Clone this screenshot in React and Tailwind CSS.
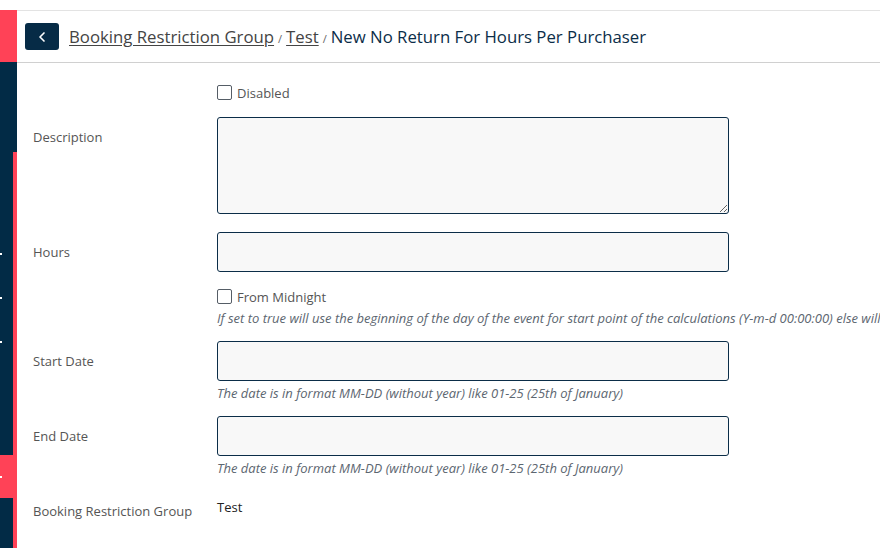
import { ChevronLeft } from "lucide-react";

function Checkbox({ label }) {
  return (
    <label className="flex items-center h-[15px]">
      <span className="w-[15px] h-[15px] border border-[#555d66] rounded-[2px] bg-white"></span>
      <span className="ml-[5px] mt-[3px] text-[13px] text-[#555]">{label}</span>
    </label>
  );
}

function Help({ children }) {
  return (
    <p className="text-[13px] leading-[18px] italic text-[#5c6670] whitespace-nowrap">{children}</p>
  );
}

function Row({ label, labelClass = "pt-[10px]", className = "", children }) {
  return (
    <div className={`flex ${className}`}>
      <div className={`w-[184px] shrink-0 text-[13px] leading-[20px] text-[#555] ${labelClass}`}>{label}</div>
      <div className="w-[512px] shrink-0">{children}</div>
    </div>
  );
}

function Sidebar() {
  return (
    <div className="w-[17px] shrink-0 flex flex-col">
      <div className="h-[10px] bg-white"></div>
      <div className="h-[52px] bg-[#ff4257]"></div>
      <div className="flex-1 flex bg-[#022b46]">
        <div className="w-[13px] flex flex-col relative">
          <div className="h-[393px]"></div>
          <div className="h-[43px] bg-[#ff4257] -mr-[4px] relative z-10"></div>
          <span className="absolute left-0 top-[191px] w-[2px] h-[2px] bg-white"></span>
          <span className="absolute left-0 top-[235px] w-[2px] h-[2px] bg-white"></span>
          <span className="absolute left-0 top-[279px] w-[2px] h-[2px] bg-white"></span>
          <span className="absolute left-0 top-[414px] w-[2px] h-[2px] bg-white z-20"></span>
        </div>
        <div className="w-[4px] flex flex-col">
          <div className="h-[90px]"></div>
          <div className="flex-1 bg-[#ff4257]"></div>
        </div>
      </div>
    </div>
  );
}

export default function App() {
  const inputClass = "block w-[512px] h-[40px] border border-[#0b2d48] rounded-[3px] bg-[#f8f8f8]";
  return (
    <div className="h-[548px] w-[880px] overflow-hidden flex bg-white" style={{ fontFamily: '"Open Sans", sans-serif' }}>
      <Sidebar />
      <div className="flex-1 min-w-0 overflow-hidden">
        <div className="mt-[10px] h-[53px] border-t border-b border-t-[#e3e3e3] border-b-[#d0d0d0] flex items-center pl-[8px]">
          <button className="w-[34px] h-[27px] rounded-[3px] bg-[#062b46] flex items-center justify-center text-white">
            <ChevronLeft size={16} strokeWidth={2.5} />
          </button>
          <div className="ml-[10px] flex items-baseline text-[16.75px] whitespace-nowrap">
            <a className="underline text-[#444] underline-offset-2">Booking Restriction Group</a>
            <span className="text-[11px] text-[#666] mx-[4px]">/</span>
            <a className="underline text-[#444] underline-offset-2">Test</a>
            <span className="text-[11px] text-[#666] mx-[4px]">/</span>
            <span className="text-[#0b2d48]">New No Return For Hours Per Purchaser</span>
          </div>
        </div>

        <div className="pl-[16px]">
          <Row label="" labelClass="" className="mt-[22px]">
            <Checkbox label="Disabled" />
          </Row>
          <Row label="Description" className="mt-[17px]">
            <textarea className="block w-[512px] h-[97px] border border-[#0b2d48] rounded-[3px] bg-[#f8f8f8]"></textarea>
          </Row>
          <Row label="Hours" className="mt-[18px]">
            <input className={inputClass} />
          </Row>
          <Row label="" labelClass="" className="mt-[17px]">
            <Checkbox label="From Midnight" />
            <div className="mt-[5px]">
              <Help>If set to true will use the beginning of the day of the event for start point of the calculations (Y-m-d 00:00:00) else will use the exact time</Help>
            </div>
          </Row>
          <Row label="Start Date" className="mt-[14px]">
            <input className={inputClass} />
            <div className="mt-[3px]">
              <Help>The date is in format MM-DD (without year) like 01-25 (25th of January)</Help>
            </div>
          </Row>
          <Row label="End Date" className="mt-[14px]">
            <input className={inputClass} />
            <div className="mt-[3px]">
              <Help>The date is in format MM-DD (without year) like 01-25 (25th of January)</Help>
            </div>
          </Row>
          <Row label="Booking Restriction Group" labelClass="pt-[4px]" className="mt-[20px]">
            <div className="text-[13px] leading-[20px] text-[#222]">Test</div>
          </Row>
        </div>
      </div>
    </div>
  );
}
